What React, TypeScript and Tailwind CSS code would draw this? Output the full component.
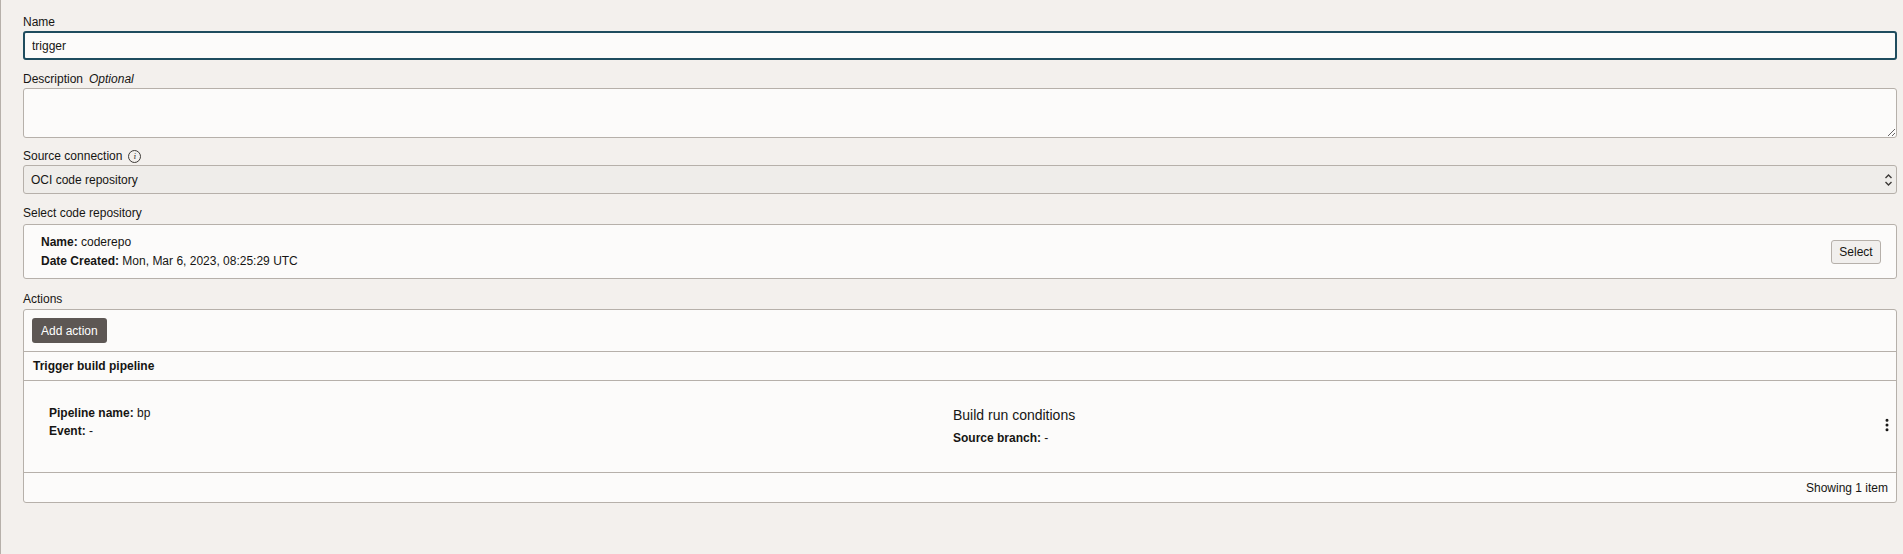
import { EllipsisVertical } from "lucide-react";

function FieldLabel({ children }: { children: React.ReactNode }) {
  return <div className="flex h-[16px] items-center text-[12px] leading-4 text-[#161513]">{children}</div>;
}

export default function App() {
  return (
    <div
      className="min-h-[554px] border-l border-[#b6b0aa] bg-[#f3f0ed] pt-[14px] pl-[22px] pr-[6px] text-[#161513]"
      style={{ fontFamily: "'Liberation Sans', Arial, sans-serif" }}
    >
      <FieldLabel>Name</FieldLabel>
      <input
        defaultValue="trigger"
        className="mt-[1px] block h-[29px] w-full rounded-[3px] border-2 border-[#1f4c5e] bg-[#fcfbfa] px-[7px] text-[12px] outline-none"
      />

      <div className="mt-[11px]">
        <FieldLabel>
          Description <span className="ml-[6px] italic">Optional</span>
        </FieldLabel>
      </div>
      <textarea className="mt-[1px] block h-[50px] w-full resize-y rounded-[3px] border border-[#b6b0aa] bg-[#fcfbfa] px-2 py-1 text-[12px] outline-none" />

      <div className="mt-[9px] flex h-[18px] items-center gap-[6px] text-[12px]">
        Source connection
        <span className="flex h-[13px] w-[13px] items-center justify-center rounded-full border border-[#3d3a37] font-serif text-[9px] italic leading-none text-[#3d3a37]">
          i
        </span>
      </div>
      <div className="relative h-[29px] w-full rounded-[3px] border border-[#b6b0aa] bg-[#efedea]">
        <div className="flex h-full items-center px-[7px] text-[12px]">OCI code repository</div>
        <svg className="absolute right-[3px] top-[7px]" width="9" height="14" viewBox="0 0 9 14" fill="none" stroke="#3d3a37" strokeWidth="1.4">
          <path d="M1.5 5 L4.5 2 L7.5 5" />
          <path d="M1.5 9 L4.5 12 L7.5 9" />
        </svg>
      </div>

      <div className="mt-[11px]">
        <FieldLabel>Select code repository</FieldLabel>
      </div>
      <div className="mt-[3px] flex h-[55px] items-center justify-between rounded-[3px] border border-[#b6b0aa] bg-[#fcfbfa] pl-[17px] pr-[15px]">
        <div className="flex flex-col gap-[3px] text-[12px] leading-4">
          <div>
            <span className="font-bold">Name:</span> coderepo
          </div>
          <div>
            <span className="font-bold">Date Created:</span> Mon, Mar 6, 2023, 08:25:29 UTC
          </div>
        </div>
        <button className="h-[24px] w-[50px] rounded-[3px] border border-[#b6b0aa] bg-[#f1efed] text-[12px]">Select</button>
      </div>

      <div className="mt-[12px]">
        <FieldLabel>Actions</FieldLabel>
      </div>
      <div className="mt-[2px] rounded-[3px] border border-[#b6b0aa] bg-[#fcfbfa]">
        <div className="flex h-[42px] items-center border-b border-[#b6b0aa] px-[8px]">
          <button className="h-[25px] rounded-[3px] bg-[#5d5754] px-[9px] text-[12px] text-white">Add action</button>
        </div>
        <div className="flex h-[29px] items-center border-b border-[#b6b0aa] px-[9px] text-[12px] font-bold">
          Trigger build pipeline
        </div>
        <div className="relative flex h-[92px] border-b border-[#b6b0aa] pl-[25px] pt-[24px]">
          <div className="flex w-[904px] flex-col gap-[2px] text-[12px] leading-4">
            <div>
              <span className="font-bold">Pipeline name:</span> bp
            </div>
            <div>
              <span className="font-bold">Event:</span> -
            </div>
          </div>
          <div className="flex flex-col">
            <div className="text-[14px] leading-5">Build run conditions</div>
            <div className="mt-[5px] text-[12px] leading-4">
              <span className="font-bold">Source branch:</span> -
            </div>
          </div>
          <EllipsisVertical size={16} strokeWidth={2.5} className="absolute right-[1px] top-[36px] text-[#161513]" />
        </div>
        <div className="flex h-[29px] items-center justify-end px-[8px] text-[12px]">Showing 1 item</div>
      </div>
    </div>
  );
}
